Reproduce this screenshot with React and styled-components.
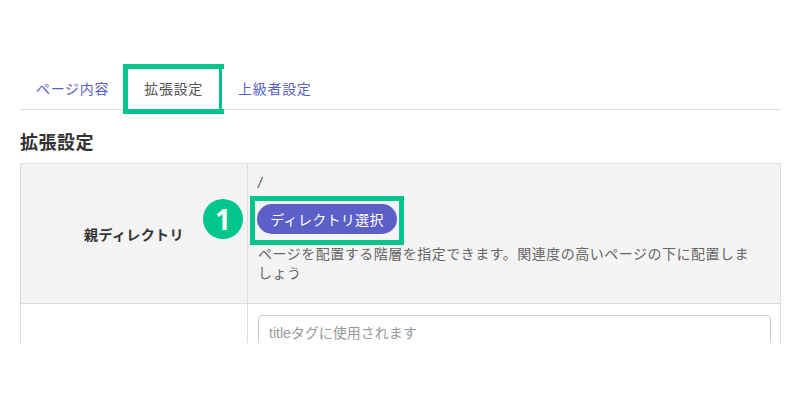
import styled, { createGlobalStyle } from "styled-components"

const GlobalStyle = createGlobalStyle`
	body {
		margin: 0;
		background: #ffffff;
		font-family: "Liberation Sans", "Noto Sans CJK JP", sans-serif;
	}
`

const tabs = [
	{ label: "ページ内容" },
	{ label: "拡張設定", active: true },
	{ label: "上級者設定" },
]

const Page = styled.div`
	height: 343px;
	overflow: hidden;
	padding: 0 19px 0 20px;
`
const TabBar = styled.nav`
	display: flex;
	margin-top: 69px;
	border-bottom: 1px solid #dddddd;
`
const Tab = styled.div`
	height: 40px;
	line-height: 40px;
	padding: 0 16px;
	margin-right: 3px;
	font-size: 14px;
	letter-spacing: 0.7px;
	color: ${({ $active }) => ($active ? "#555555" : "#5a5fc8")};
	background: #ffffff;
	outline: ${({ $active }) => ($active ? "5px solid #00c68e" : "none")};
	cursor: pointer;
`
const Heading = styled.h2`
	margin: 21px 0 8px;
	font-size: 18px;
	line-height: 24px;
	letter-spacing: 0.5px;
	font-weight: 700;
	color: #333333;
`
const Table = styled.div`
	display: grid;
	grid-template-columns: 227px 1fr;
	border-top: 1px solid #dddddd;
	border-left: 1px solid #dddddd;
`
const Label = styled.div`
	display: flex;
	align-items: center;
	justify-content: center;
	background: ${({ $shaded }) => ($shaded ? "#f4f4f4" : "#ffffff")};
	border-right: 1px solid #dddddd;
	border-bottom: 1px solid #dddddd;
	font-size: 14px;
	letter-spacing: 0.4px;
	font-weight: 700;
	color: #333333;
`
const Field = styled.div`
	display: flex;
	flex-direction: column;
	align-items: flex-start;
	padding: ${({ $pad }) => $pad};
	background: ${({ $shaded }) => ($shaded ? "#f4f4f4" : "#ffffff")};
	border-right: 1px solid #dddddd;
	border-bottom: 1px solid #dddddd;
`
const Path = styled.div`
	font-size: 14px;
	line-height: 20px;
	font-style: italic;
	color: #555555;
`
const ButtonWrap = styled.div`
	position: relative;
	margin-top: 11px;
	margin-left: -1px;

	&::after {
		content: "";
		position: absolute;
		left: -7px;
		right: -7px;
		top: -8px;
		bottom: -11px;
		border: 5px solid #00c68e;
		box-sizing: border-box;
		pointer-events: none;
	}
`
const Step = styled.span`
	position: absolute;
	left: -54px;
	top: -5px;
	width: 40px;
	height: 40px;
	border-radius: 50%;
	background: #00c68e;
	color: #ffffff;
	display: flex;
	align-items: center;
	justify-content: center;
	font-size: 28px;
	font-weight: 700;
	font-family: "Open Sans", "Liberation Sans", sans-serif;
`
const Button = styled.button`
	width: 140px;
	height: 30px;
	border: none;
	border-radius: 15px;
	background: #5b5fc7;
	color: #ffffff;
	font-family: inherit;
	font-size: 14px;
	letter-spacing: 0.3px;
	cursor: pointer;
`
const Help = styled.p`
	margin: 11px 0 0;
	max-width: 500px;
	font-size: 14px;
	line-height: 19px;
	letter-spacing: 0.5px;
	color: #666666;
`
const Input = styled.input`
	box-sizing: border-box;
	width: 100%;
	height: 36px;
	padding: 0 10px;
	border: 1px solid #cccccc;
	border-radius: 4px;
	font-family: inherit;
	font-size: 14px;
	color: #333333;

	&::placeholder {
		color: #999999;
	}
`

export default function App () {
	return (
		<>
			<GlobalStyle />
			<Page>
				<TabBar>
					{tabs.map((tab) => (
						<Tab key={tab.label} $active={tab.active}>{tab.label}</Tab>
					))}
				</TabBar>
				<Heading>拡張設定</Heading>
				<Table>
					<Label $shaded>親ディレクトリ</Label>
					<Field $shaded $pad="9px 10px 20px">
						<Path>/</Path>
						<ButtonWrap>
							<Step>1</Step>
							<Button>ディレクトリ選択</Button>
						</ButtonWrap>
						<Help>ページを配置する階層を指定できます。関連度の高いページの下に配置しましょう</Help>
					</Field>
					<Label />
					<Field $pad="11px 9px 12px 10px">
						<Input placeholder="titleタグに使用されます" />
					</Field>
				</Table>
			</Page>
		</>
	)
}
